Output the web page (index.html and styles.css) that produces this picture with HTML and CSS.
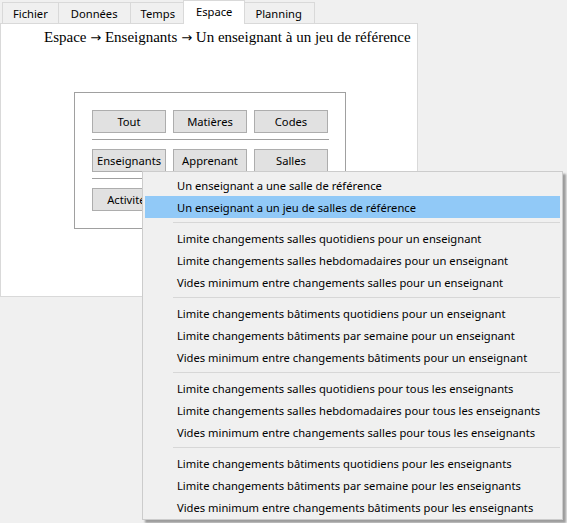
FILE: index.html
```html
<!DOCTYPE html>
<html lang="fr">
<head>
<meta charset="utf-8">
<title>Espace</title>
<link rel="stylesheet" href="styles.css">
</head>
<body>
<div class="app">
  <div class="tabs">
    <div class="tab">Fichier</div>
    <div class="tab wide">Données</div>
    <div class="tab">Temps</div>
    <div class="tab active">Espace</div>
    <div class="tab wide">Planning</div>
  </div>
  <div class="panel">
    <div class="title">Espace <span class="arrow">→</span> Enseignants <span class="arrow">→</span> Un enseignant à un jeu de référence</div>
    <div class="group">
      <div class="row">
        <button class="btn">Tout</button>
        <button class="btn">Matières</button>
        <button class="btn">Codes</button>
      </div>
      <div class="sep"></div>
      <div class="row">
        <button class="btn">Enseignants</button>
        <button class="btn">Apprenant</button>
        <button class="btn">Salles</button>
      </div>
      <div class="sep"></div>
      <div class="row">
        <button class="btn">Activités</button>
      </div>
    </div>
  </div>

  <div class="menu">
    <div class="item">Un enseignant a une salle de référence</div>
    <div class="item hover">Un enseignant a un jeu de salles de référence</div>
    <div class="msep"></div>
    <div class="item">Limite changements salles quotidiens pour un enseignant</div>
    <div class="item">Limite changements salles hebdomadaires pour un enseignant</div>
    <div class="item">Vides minimum entre changements salles pour un enseignant</div>
    <div class="msep"></div>
    <div class="item">Limite changements bâtiments quotidiens pour un enseignant</div>
    <div class="item">Limite changements bâtiments par semaine pour un enseignant</div>
    <div class="item">Vides minimum entre changements bâtiments pour un enseignant</div>
    <div class="msep"></div>
    <div class="item">Limite changements salles quotidiens pour tous les enseignants</div>
    <div class="item">Limite changements salles hebdomadaires pour tous les enseignants</div>
    <div class="item">Vides minimum entre changements salles pour tous les enseignants</div>
    <div class="msep"></div>
    <div class="item">Limite changements bâtiments quotidiens pour les enseignants</div>
    <div class="item">Limite changements bâtiments par semaine pour les enseignants</div>
    <div class="item">Vides minimum entre changements bâtiments pour les enseignants</div>
  </div>
</div>
</body>
</html>
```

FILE: styles.css
```css
html, body {
  margin: 0;
  padding: 0;
  background: #f0f0f0;
}

body {
  font-family: "Noto Sans", "Open Sans", sans-serif;
  font-size: 11.2px;
  color: #000;
}

.app {
  position: relative;
  width: 567px;
  height: 523px;
}

.tabs {
  display: flex;
  align-items: flex-end;
  height: 23px;
  padding-left: 3px;
}

.tab {
  box-sizing: border-box;
  height: 21px;
  padding: 0 10px 0 10px;
  margin-left: -1px;
  border: 1px solid #d9d9d9;
  border-bottom: none;
  background: #f0f0f0;
  line-height: 21px;
  white-space: nowrap;
}

.tab.wide {
  padding: 0 12px;
}

.tab.active {
  position: relative;
  z-index: 2;
  height: 24px;
  margin: 0 -2px -1px -3px;
  padding: 0 12px;
  background: #fff;
  line-height: 22px;
}

.panel {
  box-sizing: border-box;
  width: 418px;
  height: 274px;
  border: 1px solid #d9d9d9;
  background: #fff;
}

.title {
  font-family: "Liberation Serif", "Times New Roman", serif;
  font-size: 15px;
  line-height: 20px;
  padding: 3px 0 0 43px;
  white-space: nowrap;
}

.arrow {
  font-family: "DejaVu Sans", sans-serif;
  font-size: 13px;
}

.group {
  box-sizing: border-box;
  width: 272px;
  margin: 44px 0 0 73px;
  padding: 17px;
  border: 1px solid #a0a0a0;
}

.row {
  display: flex;
  gap: 7px;
}

.btn {
  box-sizing: border-box;
  width: 74px;
  height: 23px;
  padding: 0;
  border: 1px solid #adadad;
  background: #e1e1e1;
  font-family: "Noto Sans", "Open Sans", sans-serif;
  font-size: 11.2px;
  color: #000;
  white-space: nowrap;
  overflow: hidden;
}

.sep {
  height: 1px;
  width: 237px;
  margin: 6px 0 9px;
  background: #a0a0a0;
}

.menu {
  position: absolute;
  left: 142px;
  top: 171px;
  box-sizing: border-box;
  width: 421px;
  padding: 2px 2px 1px 2px;
  border: 1px solid #cccccc;
  background: #f0f0f0;
  box-shadow: 3px 3px 2px rgba(0, 0, 0, 0.35);
  z-index: 5;
}

.item {
  height: 22px;
  line-height: 23px;
  padding-left: 32px;
  white-space: nowrap;
}

.item.hover {
  background: #91c9f7;
}

.msep {
  height: 1px;
  margin: 4px 0 4px 28px;
  background: #d7d7d7;
}
```
